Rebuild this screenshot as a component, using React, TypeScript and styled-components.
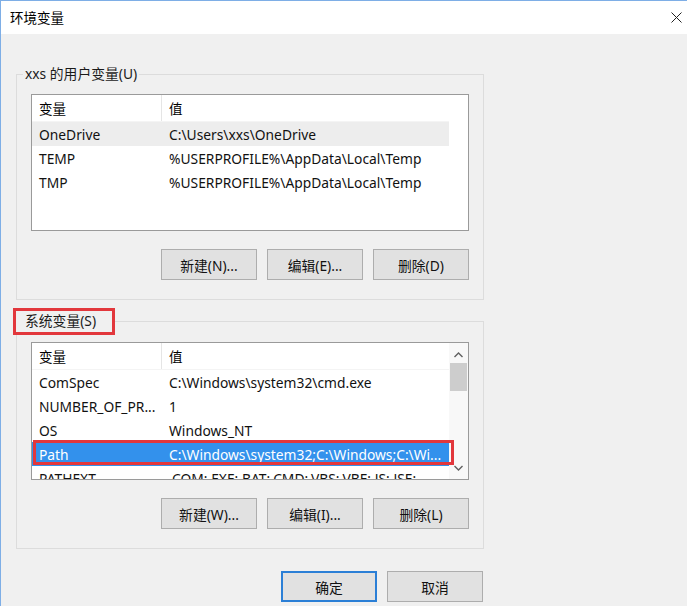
import React from "react";
import styled, { createGlobalStyle } from "styled-components";

const Global = createGlobalStyle`
  html, body { margin: 0; padding: 0; background: #f0f0f0; }
  body {
    font-family: "Noto Sans", "Noto Sans CJK SC", sans-serif;
    font-size: 13.8px;
    color: #000;
  }
  * { box-sizing: border-box; }
`;

const Window = styled.div`
  width: 687px;
  height: 606px;
  border-left: 1px solid #7eaee6;
  border-top: 1px solid #7eaee6;
  background: #f0f0f0;
  overflow: hidden;
`;

const TitleBar = styled.div`
  height: 33px;
  background: #fff;
  display: flex;
  align-items: center;
  justify-content: space-between;
  padding: 0 3px 1px 9px;
`;

const Title = styled.span`
  font-family: "Noto Sans CJK SC", sans-serif;
  font-size: 13.5px;
  line-height: 18px;
`;

const CloseBtn = styled.span`
  width: 16px;
  height: 16px;
  display: flex;
  align-items: center;
  justify-content: center;
`;

const Body = styled.div`
  padding: 31px 0 0 15px;
  display: flex;
  flex-direction: column;
`;

const Group = styled.fieldset<{ $gap?: number }>`
  width: 468px;
  margin: ${(p) => p.$gap ?? 0}px 0 0 0;
  border: 1px solid #dcdcdc;
  padding: ${(p) => (p.$gap ? 7 : 11)}px 14px 19px 14px;
  min-width: 0;
`;

const Legend = styled.legend<{ $marked?: boolean }>`
  font-family: "Noto Sans", "Noto Sans CJK SC", sans-serif;
  font-size: 13.8px;
  line-height: 18px;
  margin-left: ${(p) => (p.$marked ? -18 : -8)}px;
  padding: ${(p) => (p.$marked ? "1px 16px 2px 9px" : "0 2px")};
  border: ${(p) => (p.$marked ? "3px solid #e2373c" : "none")};
  color: #1a1a1a;
`;

const ListBox = styled.div<{ $h: number }>`
  height: ${(p) => p.$h}px;
  border: 1px solid #9a9a9a;
  background: #fff;
  display: flex;
  overflow: hidden;
`;

const Rows = styled.div`
  width: 417px;
  flex: none;
  display: flex;
  flex-direction: column;
`;

const HeaderRow = styled.div`
  height: 27px;
  flex: none;
  display: flex;
  background: #fff;
  border-bottom: 1px solid #f4f4f4;
`;

const HeaderCell = styled.div<{ $first?: boolean }>`
  width: ${(p) => (p.$first ? "130px" : "auto")};
  flex: ${(p) => (p.$first ? "none" : "1")};
  padding-left: 7px;
  display: flex;
  align-items: center;
  border-right: ${(p) => (p.$first ? "1px solid #e5e5e5" : "none")};
  font-family: "Noto Sans CJK SC", sans-serif;
  font-size: 13.5px;
`;

const Row = styled.div<{ $sel?: "gray" | "blue" }>`
  position: relative;
  height: 24px;
  flex: none;
  display: flex;
  align-items: center;
  white-space: nowrap;
  background: ${(p) =>
    p.$sel === "gray" ? "#ededed" : p.$sel === "blue" ? "#3391ec" : "transparent"};
  color: ${(p) => (p.$sel === "blue" ? "#fff" : "#111")};
`;

const Cell = styled.div<{ $first?: boolean }>`
  width: ${(p) => (p.$first ? "130px" : "auto")};
  flex: ${(p) => (p.$first ? "none" : "1")};
  padding-left: 7px;
  overflow: hidden;
`;

const Mark = styled.span`
  position: absolute;
  left: 1px;
  right: -5px;
  top: -2px;
  bottom: 1px;
  border: 3px solid #e2373c;
  z-index: 1;
`;

const ScrollTrack = styled.div<{ $visible?: boolean }>`
  flex: 1;
  display: flex;
  flex-direction: column;
  align-items: center;
  background: ${(p) => (p.$visible ? "#f8f8f8" : "#fff")};
`;

const ArrowBox = styled.div<{ $down?: boolean }>`
  height: 19px;
  width: 100%;
  display: flex;
  align-items: ${(p) => (p.$down ? "flex-start" : "flex-end")};
  padding: ${(p) => (p.$down ? "5px 0 0" : "0 0 4px")};
  justify-content: center;
  flex: none;
`;

const Thumb = styled.div`
  width: 17px;
  height: 28px;
  margin-top: 1px;
  background: #cdcdcd;
  flex: none;
`;

const Spacer = styled.div`
  flex: 1;
`;

const ButtonRow = styled.div<{ $top: number }>`
  display: flex;
  justify-content: flex-end;
  gap: 10px;
  margin-top: ${(p) => p.$top}px;
`;

const Button = styled.button<{ $primary?: boolean }>`
  width: 96px;
  height: 31px;
  background: #e1e1e1;
  border: ${(p) => (p.$primary ? "2px solid #2b7fd6" : "1px solid #adadad")};
  font-family: "Noto Sans", "Noto Sans CJK SC", sans-serif;
  font-size: 13.8px;
  color: #111;
  padding: 0;
  display: flex;
  align-items: center;
  justify-content: center;
`;

const Footer = styled.div`
  width: 468px;
  display: flex;
  justify-content: flex-end;
  gap: 10px;
  margin-top: 22px;
  padding-right: 1px;
`;

type Item = { name: string; value: string; sel?: "gray" | "blue"; mark?: boolean };

const userVars: Item[] = [
  { name: "OneDrive", value: "C:\\Users\\xxs\\OneDrive", sel: "gray" },
  { name: "TEMP", value: "%USERPROFILE%\\AppData\\Local\\Temp" },
  { name: "TMP", value: "%USERPROFILE%\\AppData\\Local\\Temp" },
];

const sysVars: Item[] = [
  { name: "ComSpec", value: "C:\\Windows\\system32\\cmd.exe" },
  { name: "NUMBER_OF_PR...", value: "1" },
  { name: "OS", value: "Windows_NT" },
  { name: "Path", value: "C:\\Windows\\system32;C:\\Windows;C:\\Wi...", sel: "blue", mark: true },
  { name: "PATHEXT", value: ".COM;.EXE;.BAT;.CMD;.VBS;.VBE;.JS;.JSE;..." },
];

const Chevron = ({ up }: { up?: boolean }) => (
  <svg width="9" height="6" viewBox="0 0 9 6">
    <polyline
      points={up ? "0.5,5 4.5,1 8.5,5" : "0.5,1 4.5,5 8.5,1"}
      fill="none"
      stroke="#606060"
      strokeWidth="1.4"
    />
  </svg>
);

const VarList = ({ items, h, scroll }: { items: Item[]; h: number; scroll?: boolean }) => (
  <ListBox $h={h}>
    <Rows>
      <HeaderRow>
        <HeaderCell $first>变量</HeaderCell>
        <HeaderCell>值</HeaderCell>
      </HeaderRow>
      {items.map((it) => (
        <Row key={it.name} $sel={it.sel}>
          <Cell $first>{it.name}</Cell>
          <Cell>{it.value}</Cell>
          {it.mark && <Mark />}
        </Row>
      ))}
    </Rows>
    <ScrollTrack $visible={scroll}>
      {scroll && (
        <>
          <ArrowBox>
            <Chevron up />
          </ArrowBox>
          <Thumb />
          <Spacer />
          <ArrowBox $down>
            <Chevron />
          </ArrowBox>
        </>
      )}
    </ScrollTrack>
  </ListBox>
);

export default function App() {
  return (
    <>
      <Global />
      <Window>
        <TitleBar>
          <Title>环境变量</Title>
          <CloseBtn>
            <svg width="11" height="11" viewBox="0 0 11 11">
              <path d="M0.5 0.5 L10.5 10.5 M10.5 0.5 L0.5 10.5" stroke="#222" strokeWidth="1" />
            </svg>
          </CloseBtn>
        </TitleBar>
        <Body>
          <Group>
            <Legend>xxs 的用户变量(U)</Legend>
            <VarList items={userVars} h={137} />
            <ButtonRow $top={18}>
              <Button>新建(N)...</Button>
              <Button>编辑(E)...</Button>
              <Button>删除(D)</Button>
            </ButtonRow>
          </Group>
          <Group $gap={8}>
            <Legend $marked>系统变量(S)</Legend>
            <VarList items={sysVars} h={138} scroll />
            <ButtonRow $top={18}>
              <Button>新建(W)...</Button>
              <Button>编辑(I)...</Button>
              <Button>删除(L)</Button>
            </ButtonRow>
          </Group>
          <Footer>
            <Button $primary>确定</Button>
            <Button>取消</Button>
          </Footer>
        </Body>
      </Window>
    </>
  );
}
